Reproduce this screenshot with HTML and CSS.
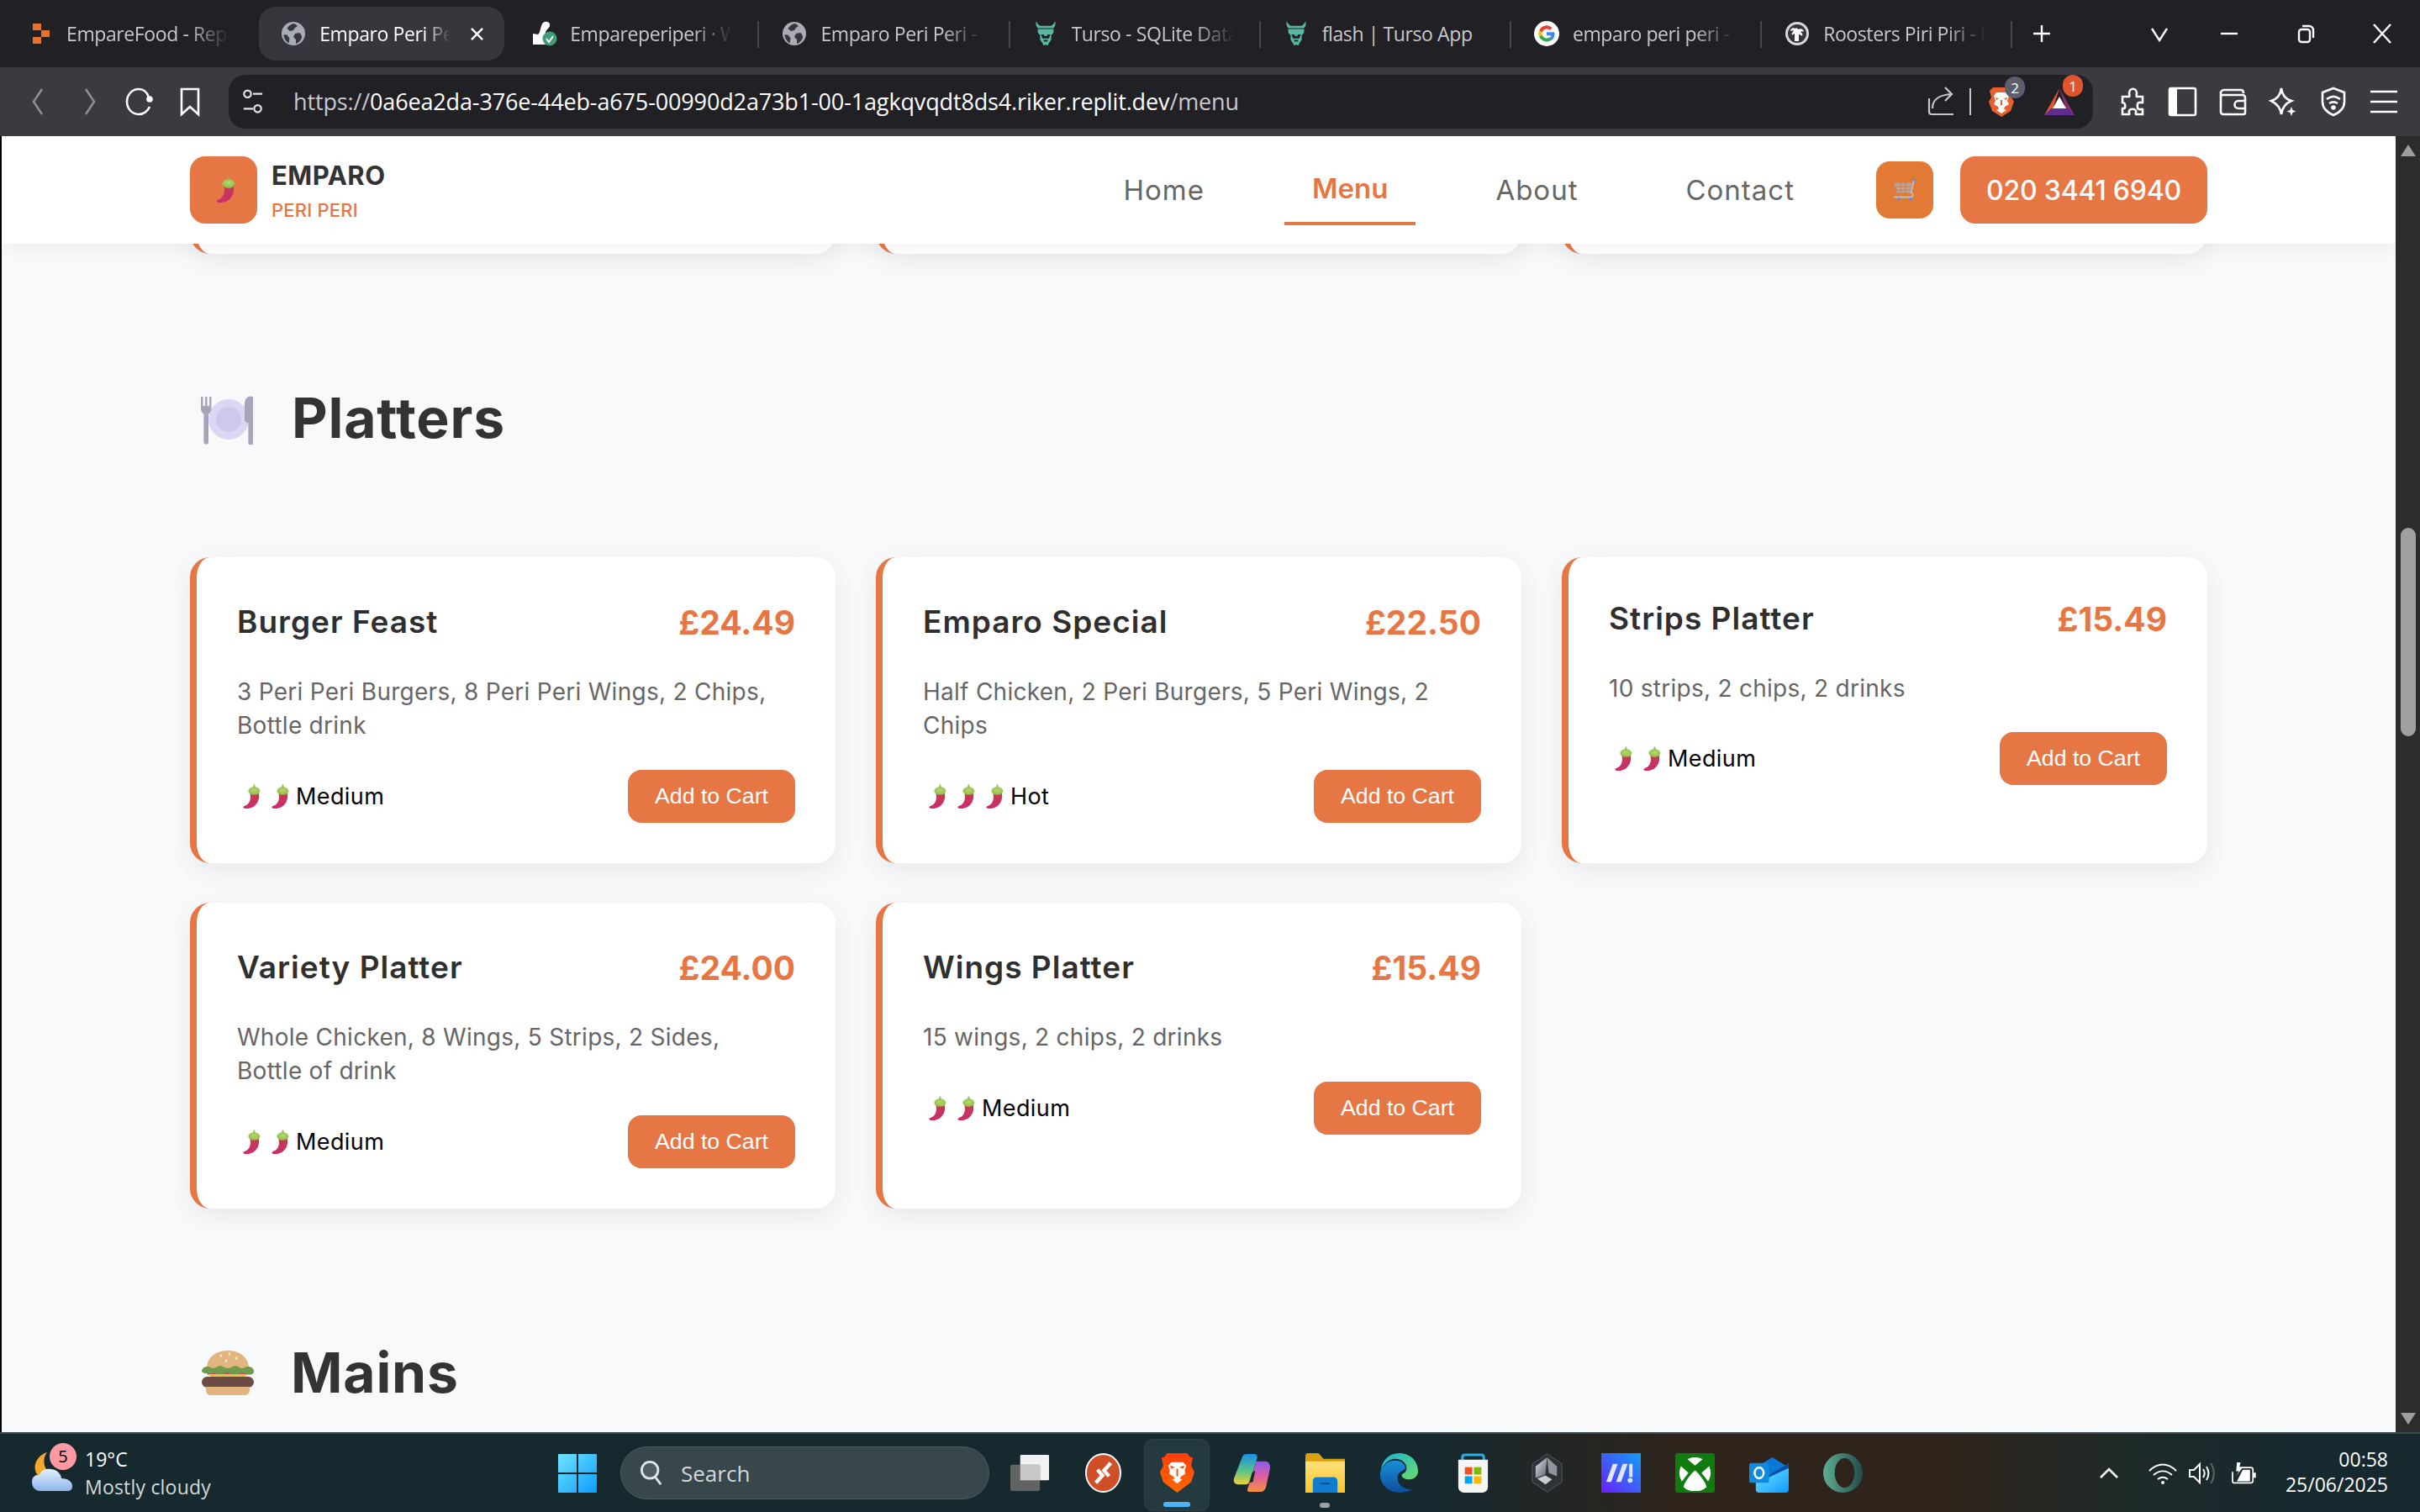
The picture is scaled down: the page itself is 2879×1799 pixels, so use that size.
FILE: index.html
```html
<!DOCTYPE html>
<html lang="en">
<head>
<meta charset="utf-8">
<title>Emparo Peri Peri - Menu</title>
<link rel="stylesheet" href="styles.css">
</head>
<body>
<svg class="defs" aria-hidden="true">
  <defs>
    <linearGradient id="gChili" x1="0" y1="0" x2="0" y2="1"><stop offset="0" stop-color="#c43c50"/><stop offset="1" stop-color="#c92d70"/></linearGradient>
    <radialGradient id="gCap" cx=".5" cy=".4" r=".6"><stop offset="0" stop-color="#b9d96a"/><stop offset="1" stop-color="#8dba4a"/></radialGradient>
    <linearGradient id="gBrave" x1="0" y1="0" x2="0" y2="1"><stop offset="0" stop-color="#ff3d0c"/><stop offset="1" stop-color="#ff6a00"/></linearGradient>
    <linearGradient id="gStart" x1="0" y1="0" x2="1" y2="1"><stop offset="0" stop-color="#6fe5ff"/><stop offset="1" stop-color="#0f9bff"/></linearGradient>
    <linearGradient id="gCloud" x1="0" y1="0" x2="0" y2="1"><stop offset="0" stop-color="#e6f0ff"/><stop offset="1" stop-color="#8db4ec"/></linearGradient>
    <linearGradient id="gCopA" x1="0" y1="0" x2="0" y2="1"><stop offset="0" stop-color="#1a8fe8"/><stop offset=".55" stop-color="#58c48a"/><stop offset="1" stop-color="#f2d02c"/></linearGradient>
    <linearGradient id="gCopB" x1="0" y1="0" x2="0" y2="1"><stop offset="0" stop-color="#8a5cf0"/><stop offset=".5" stop-color="#e05fa0"/><stop offset="1" stop-color="#f5913c"/></linearGradient>
    <linearGradient id="gEdge" x1="0" y1="0" x2="1" y2="1"><stop offset="0" stop-color="#1bb3d6"/><stop offset="1" stop-color="#6bdc6e"/></linearGradient>
    <linearGradient id="gEdgeB" x1="0" y1="0" x2="0" y2="1"><stop offset="0" stop-color="#1a8fd8"/><stop offset="1" stop-color="#0d4e9a"/></linearGradient>
    <linearGradient id="gMail" x1="1" y1="0" x2="0" y2="1"><stop offset="0" stop-color="#0f9ff5"/><stop offset="1" stop-color="#6a1fff"/></linearGradient>
    <linearGradient id="gShield" x1="0" y1="0" x2="1" y2="1"><stop offset="0" stop-color="#dfe4ea"/><stop offset="1" stop-color="#5a6068"/></linearGradient>
    <linearGradient id="gOpera" x1="0" y1="0" x2="1" y2="0"><stop offset="0" stop-color="#5fae92"/><stop offset="1" stop-color="#234a4a"/></linearGradient>
    <linearGradient id="gFolder" x1="0" y1="0" x2="0" y2="1"><stop offset="0" stop-color="#ffe07a"/><stop offset="1" stop-color="#fdc52e"/></linearGradient>

    <symbol id="chili" viewBox="0 0 26 28">
      <path fill="url(#gChili)" d="M13 9h10c1.500 6-.5 12-5 15.500-3 2.300-9 3.500-11.500 2-1.300-1 0-2.300 1.800-2.800C12.500 22.500 15.500 16 13 9z"/>
      <ellipse cx="18" cy="7.500" rx="6.500" ry="4.500" fill="url(#gCap)"/>
      <rect x="17.200" y="0.500" width="1.700" height="4" fill="#8dba4a"/>
    </symbol>
    <symbol id="plate" viewBox="0 0 64 58">
      <circle cx="34" cy="28" r="24" fill="#dcd6f3"/>
      <circle cx="34" cy="28" r="15" fill="#cfc8ec"/>
      <path fill="#a8a4bb" d="M1 1h2.500v11H6V1h2.500v11H11V1h2.500v14c0 4-2.500 6-3.500 6.500V55a2.800 2.800 0 0 1-5.600 0V21.500C3 21 1 19 1 15z"/>
      <path fill="#a8a4bb" d="M55 3c3-3 7.500-3 8-1v54a2.800 2.800 0 0 1-5.600 0V32c-3 0-4.400-2-4.400-4V10c0-3 .8-5.500 2-7z"/>
    </symbol>
    <symbol id="burger" viewBox="0 0 64 54">
      <path fill="#e2b57f" d="M7 22C7 8 19 1 32 1s25 7 25 21z"/>
      <g fill="#f6e7c8"><ellipse cx="24" cy="7" rx="1.300" ry="2"/><ellipse cx="34" cy="5" rx="1.300" ry="2"/><ellipse cx="42" cy="10" rx="1.300" ry="2"/><ellipse cx="30" cy="13" rx="1.300" ry="2"/></g>
      <path fill="#cf4a5a" d="M8 24h48v6H8z"/>
      <path fill="#6f9b4f" d="M1 25c0-4 3-6 7-6 3 0 4 2 7 2s5-3 8-3 5 3 9 3 6-3 9-3 5 3 8 3 3-2 7-2 7 2 7 6-5 4-8 3-5-2-8-1-6 3-9 2-4-3-7-3-5 3-8 3-6-3-9-2-13 1-13-3z" transform="translate(0 1)"/>
      <path fill="#e8c53a" d="M8 29h48l-8 7H16z"/>
      <rect x="1" y="32" width="62" height="13" rx="6.500" fill="#6c4b42"/>
      <path fill="#e2b57f" d="M6 44h52v4c0 4-3 6-6 6H12c-3 0-6-2-6-6z"/>
    </symbol>
    <symbol id="cart" viewBox="0 0 28 28">
      <path fill="#c9a58c" stroke="#9aa3b3" stroke-width="1.300" d="M2 6h20l-1.500 11H5z"/>
      <path fill="none" stroke="#d07a4a" stroke-width="1" d="M2.800 10h19M3.600 14h17.200M9 6l.8 11M15 6l-.3 11"/>
      <path fill="none" stroke="#b8c0cc" stroke-width="1.800" d="M25 2l-3.500 15c3 1 3 5 .2 5.500H1"/>
      <circle cx="25.500" cy="2" r="1.500" fill="#5f86d8"/>
      <circle cx="7" cy="25" r="1.800" fill="#5f86d8"/><circle cx="21" cy="25" r="1.800" fill="#5f86d8"/>
    </symbol>
    <symbol id="globe" viewBox="0 0 30 30">
      <circle cx="15" cy="15" r="14" fill="#a9acb2"/>
      <path fill="#36363c" d="M15 3c-3 1-6 3-7.500 6l3.500 3 4-1 2-3 3-2c-1.500-1.500-3-3-5-3zM22 14l-5 1-2 4 3 3v5c3-1 6-4 7-7 .5-2-1-5-3-6zM3.500 16c0 4 2 8 6 10.500l1-6-3-4z"/>
    </symbol>
    <symbol id="bull" viewBox="3 0 26 32">
      <path fill="#5bb8a0" d="M4 0c-1 4 0 7 2 9h20c2-2 3-5 2-9-1 3-3 5-5 6H9C7 5 5 3 4 0zM6 10h20v5l-3 3v6l-3 4-1 3-3-1-3 1-1-3-3-4v-6l-3-3z"/>
      <path fill="#202025" d="M10 17h4v2h4v-2h4l-2 5h-8zM13 24h6l-1 2h-4z"/>
    </symbol>
    <symbol id="gicon" viewBox="0 0 32 32">
      <circle cx="16" cy="16" r="16" fill="#fff"/>
      <path fill="#4285f4" d="M26 16.300c0-.8-.1-1.500-.2-2.200H16v4.200h5.700c-.3 1.300-1 2.400-2.100 3.100v2.700h3.400c2-1.800 3-4.600 3-7.800z"/>
      <path fill="#34a853" d="M16 26c2.800 0 5.100-.9 6.900-2.500l-3.400-2.600c-.9.600-2.100 1-3.500 1-2.700 0-5-1.800-5.800-4.300H6.700v2.700C8.400 23.700 11.900 26 16 26z"/>
      <path fill="#fbbc05" d="M10.200 17.600c-.4-1.100-.4-2.200 0-3.300v-2.700H6.700a10 10 0 0 0 0 8.700z"/>
      <path fill="#ea4335" d="M16 10c1.500 0 2.900.5 4 1.600l3-3A10 10 0 0 0 6.700 11.600l3.500 2.700C11 11.800 13.300 10 16 10z"/>
    </symbol>
    <symbol id="lion" viewBox="0 0 32 38">
      <path fill="#e8602c" d="M6 2h20l4 4-2 8 3 5-4 11-11 7-11-7L1 19l3-5-2-8z"/>
      <path fill="#fff" d="M10 8h12l3 4-2 6 2 4-5 3-1 3 3 1-6 4-6-4 3-1-1-3-5-3 2-4-2-6z"/>
      <path fill="#e8602c" d="M13 15l-4-1 1 3zM19 15l4-1-1 3zM15 17h2v6h-2z"/>
    </symbol>
    <symbol id="bravebig" viewBox="0 0 42 48">
      <path fill="url(#gBrave)" d="M9 0h24l4 5 3 0-2 10 4 8-4 12-17 13L4 35 0 23l4-8-2-10 3 0z"/>
      <path fill="#fff" d="M14 11h14l4 4-2 6 1 4-5 3-2 3 3 1-6 5-6-5 3-1-2-3-5-3 1-4-2-6z"/>
      <path fill="#ff4d0c" d="M18.500 17l-6-2 1 4zM23.500 17l6-2-1 4zM20 19h2v9h-2z"/>
    </symbol>
    <symbol id="triangle" viewBox="0 0 36 32">
      <path fill="#e0552e" d="M18 0L0 32h8z"/>
      <path fill="#8a2f6a" d="M18 0l18 32h-8z"/>
      <path fill="#fff" d="M18 10l8 14H10z"/>
      <path fill="#5f2d90" d="M8 24h20l8 8H0z"/>
    </symbol>
    <symbol id="winstart" viewBox="0 0 46 46">
      <path fill="url(#gStart)" d="M1 0h21v22H0V1a1 1 0 0 1 1-1zM24 0h21a1 1 0 0 1 1 1v21H24zM0 24h22v22H1a1 1 0 0 1-1-1zM24 24h22v21a1 1 0 0 1-1 1H24z"/>
    </symbol>
  </defs>
</svg>

<div class="screen">
  <div class="tabstrip">
    <div class="tab"><svg class="fav fav-small" viewBox="0 0 20 24"><path fill="#e8702a" d="M0 0h10v8H0zM10 8h10v8H10zM0 16h10v8H0z"/></svg><span class="tab-title">EmpareFood - Replit</span></div>
    <div class="tab tab-active"><svg class="fav"><use href="#globe"/></svg><span class="tab-title">Emparo Peri Peri - Menu</span><svg class="tab-close" viewBox="0 0 16 16"><path d="M1 1l14 14M15 1L1 15"/></svg></div>
    <div class="tab"><svg class="fav" viewBox="0 0 30 30"><path fill="#fff" d="M14 2c5-3 9 0 8 4-1 3-5 5-5 8v14H2V15l6 1c3-2 3-11 6-14z"/><circle cx="22" cy="21" r="8.500" fill="#3f9b78"/><path fill="none" stroke="#fff" stroke-width="2" d="M18 21l3 4 5-7"/></svg><span class="tab-title">Empareperiperi · Wix Studio</span></div>
    <div class="tab tab-sep"><svg class="fav"><use href="#globe"/></svg><span class="tab-title">Emparo Peri Peri - Admin</span></div>
    <div class="tab tab-sep"><svg class="fav"><use href="#bull"/></svg><span class="tab-title">Turso - SQLite Database</span></div>
    <div class="tab tab-sep"><svg class="fav"><use href="#bull"/></svg><span class="tab-title tab-plain">flash | Turso App</span></div>
    <div class="tab tab-sep"><svg class="fav"><use href="#gicon"/></svg><span class="tab-title">emparo peri peri - Google</span></div>
    <div class="tab tab-sep"><svg class="fav" viewBox="0 0 30 30"><circle cx="15" cy="15" r="14" fill="#d8d8dc"/><circle cx="15" cy="15" r="11" fill="#34343c"/><path fill="#fff" d="M13 9c-3-2-6 0-6 3 2-1 3-1 4 0-2 1-3 3-2 5 1-1 2-2 3-2v9h5v-8c2 0 3 1 4 2 1-2 0-4-2-5 1-1 3-1 4 0 0-3-4-5-7-3-1-2-2-2-3-1z"/></svg><span class="tab-title">Roosters Piri Piri - Kingston</span></div>
    <div class="newtab tab-sep"><svg class="glyph" viewBox="0 0 24 24"><path d="M12 2v20M2 12h20"/></svg></div>
    <div class="winctl">
      <div class="win-chev"><svg class="glyph" viewBox="0 0 24 24"><path d="M3 6l9 14 9-14"/></svg></div>
      <div class="win-btn"><svg class="glyph" viewBox="0 0 24 24"><path d="M2 12h20"/></svg></div>
      <div class="win-btn"><svg class="glyph" viewBox="0 0 24 24"><rect x="4" y="7" width="13" height="15" rx="3"/><path d="M8 3h8a5 5 0 0 1 5 5v9"/></svg></div>
      <div class="win-btn"><svg class="glyph" viewBox="0 0 24 24"><path d="M2 1l20 22M22 1L2 23"/></svg></div>
    </div>
  </div>

  <div class="toolbar">
    <div class="tool"><svg class="tool-ic dim" viewBox="0 0 30 36"><path d="M19 3L9 18l10 15"/></svg></div>
    <div class="tool"><svg class="tool-ic dim" viewBox="0 0 30 36"><path d="M11 3l10 15-10 15"/></svg></div>
    <div class="tool"><svg class="tool-ic" viewBox="0 0 36 36"><path d="M29 13C27 6 22 3 17 3 9 3 3 10 3 18s6 15 14 15c6 0 11-4 13-9"/><circle cx="30" cy="15" r="2.500" fill="#fff"/></svg></div>
    <div class="tool"><svg class="tool-ic" viewBox="0 0 36 36"><path d="M8 3h20v30l-10-9-10 9z"/></svg></div>
    <div class="address">
      <svg class="site-ic" viewBox="0 0 28 32"><circle cx="7" cy="6" r="4.500"/><path d="M14 6h12M2 25h12"/><circle cx="20" cy="25" r="4.500"/></svg>
      <div class="url"><span class="url-dim">https://</span>0a6ea2da-376e-44eb-a675-00990d2a73b1-00-1agkqvqdt8ds4.riker.replit.dev<span class="url-dim">/menu</span></div>
      <div class="addr-ic"><svg class="share" viewBox="0 0 34 36"><path d="M2 14v16a3 3 0 0 0 3 3h26M6 26c0-10 6-16 23-17M21 1l8 8-8 8"/></svg></div>
      <div class="addr-sep"></div>
      <div class="addr-ic addr-brave"><svg class="lion"><use href="#lion"/></svg><span class="addr-badge badge-grey">2</span></div>
      <div class="addr-ic addr-tri"><svg class="tri"><use href="#triangle"/></svg><span class="addr-badge badge-red">1</span></div>
    </div>
    <div class="tool"><svg class="tool-ic" viewBox="0 0 36 36"><path d="M14 8c0-7 9-7 9 0 0 2-1 3 0 4h7v7c-1 1-3-1-4 0-3 0-3 8 0 8 1 1 3-1 4 0v6H22c-1-1 1-3 0-4-1-3-7-3-8 0-1 1 1 3 0 4H6v-7c1-1 3 1 3-1 1-4-1-6-3-6V12h8c1-1 0-2 0-4z" transform="translate(1 0)"/></svg></div>
    <div class="tool"><svg class="tool-ic" viewBox="0 0 36 36"><rect x="3" y="2" width="31" height="32" rx="2"/><path class="fillwhite" d="M3 2h9v32H3z"/></svg></div>
    <div class="tool"><svg class="tool-ic" viewBox="0 0 36 36"><path d="M4 9a4 4 0 0 1 4-5h20c2 0 3 1 3 4M4 9v21a3 3 0 0 0 3 3h24a2 2 0 0 0 2-2V13a3 3 0 0 0-3-3H7a3 3 0 0 1-3-1zM34 17H25a4 4 0 0 0 0 9h9"/></svg></div>
    <div class="tool"><svg class="tool-ic" viewBox="0 0 36 36"><path d="M16 2c1 8 5 13 12 15-7 3-11 8-12 16-1-8-6-13-12-16 7-2 11-7 12-15z"/><path class="fillwhite" d="M28 24l1.500 4 4 1.500-4 1.500-1.500 4-1.500-4-4-1.500 4-1.500z"/></svg></div>
    <div class="tool"><svg class="tool-ic" viewBox="0 0 36 36"><path d="M18 2l13 5v11c0 8-6 13-13 16C11 31 5 26 5 18V7z"/><path d="M10 15c5-4 11-4 16 0M13 20c3-2 7-2 10 0"/><circle cx="18" cy="25" r="1.500" fill="#fff"/></svg></div>
    <div class="tool"><svg class="tool-ic" viewBox="0 0 36 36"><path d="M2 6h32M2 18h32M2 30h32"/></svg></div>
  </div>

  <div class="viewport">
    <div class="page">
      <header class="site-header">
        <div class="brand">
          <div class="brand-mark"><svg class="brand-chili"><use href="#chili"/></svg></div>
          <div class="brand-text">
            <div class="brand-name">EMPARO</div>
            <div class="brand-sub">PERI PERI</div>
          </div>
        </div>
        <nav class="nav">
          <a class="nav-link">Home</a>
          <a class="nav-link nav-active">Menu</a>
          <a class="nav-link">About</a>
          <a class="nav-link">Contact</a>
          <a class="cart-btn"><svg class="cart-ic"><use href="#cart"/></svg></a>
          <a class="phone-btn">020 3441 6940</a>
        </nav>
      </header>

      <main class="content">
        <div class="grid stubs">
          <div class="card stub"></div>
          <div class="card stub"></div>
          <div class="card stub"></div>
        </div>

        <section class="section">
          <h2 class="section-title"><svg class="section-ic section-plate"><use href="#plate"/></svg>Platters</h2>
          <div class="grid">
            <article class="card">
              <div class="card-head"><h3 class="card-name">Burger Feast</h3><div class="card-price">£24.49</div></div>
              <p class="card-desc">3 Peri Peri Burgers, 8 Peri Peri Wings, 2 Chips, Bottle drink</p>
              <div class="card-foot">
                <div class="heat"><svg class="chili"><use href="#chili"/></svg><svg class="chili"><use href="#chili"/></svg><span class="heat-label">Medium</span></div>
                <button class="add-btn">Add to Cart</button>
              </div>
            </article>
            <article class="card">
              <div class="card-head"><h3 class="card-name">Emparo Special</h3><div class="card-price">£22.50</div></div>
              <p class="card-desc">Half Chicken, 2 Peri Burgers, 5 Peri Wings, 2 Chips</p>
              <div class="card-foot">
                <div class="heat"><svg class="chili"><use href="#chili"/></svg><svg class="chili"><use href="#chili"/></svg><svg class="chili"><use href="#chili"/></svg><span class="heat-label">Hot</span></div>
                <button class="add-btn">Add to Cart</button>
              </div>
            </article>
            <article class="card card-raised">
              <div class="card-head"><h3 class="card-name">Strips Platter</h3><div class="card-price">£15.49</div></div>
              <p class="card-desc">10 strips, 2 chips, 2 drinks</p>
              <div class="card-foot">
                <div class="heat"><svg class="chili"><use href="#chili"/></svg><svg class="chili"><use href="#chili"/></svg><span class="heat-label">Medium</span></div>
                <button class="add-btn">Add to Cart</button>
              </div>
            </article>
            <article class="card">
              <div class="card-head"><h3 class="card-name">Variety Platter</h3><div class="card-price">£24.00</div></div>
              <p class="card-desc">Whole Chicken, 8 Wings, 5 Strips, 2 Sides, Bottle of drink</p>
              <div class="card-foot">
                <div class="heat"><svg class="chili"><use href="#chili"/></svg><svg class="chili"><use href="#chili"/></svg><span class="heat-label">Medium</span></div>
                <button class="add-btn">Add to Cart</button>
              </div>
            </article>
            <article class="card">
              <div class="card-head"><h3 class="card-name">Wings Platter</h3><div class="card-price">£15.49</div></div>
              <p class="card-desc">15 wings, 2 chips, 2 drinks</p>
              <div class="card-foot">
                <div class="heat"><svg class="chili"><use href="#chili"/></svg><svg class="chili"><use href="#chili"/></svg><span class="heat-label">Medium</span></div>
                <button class="add-btn">Add to Cart</button>
              </div>
            </article>
          </div>
        </section>

        <section class="section section-next">
          <h2 class="section-title"><svg class="section-ic section-burger"><use href="#burger"/></svg>Mains</h2>
        </section>
      </main>
    </div>
    <div class="scrollbar">
      <div class="scroll-arrow scroll-up"></div>
      <div class="scroll-thumb"></div>
      <div class="scroll-arrow scroll-down"></div>
    </div>
  </div>

  <footer class="taskbar">
    <div class="weather">
      <div class="weather-ic">
        <svg class="weather-art" viewBox="0 0 48 48"><path fill="#f4a92e" d="M18 2C6 6 0 18 6 28c3 3 10 2 14-2C14 20 12 10 18 2z"/><path fill="url(#gCloud)" d="M10 47C2 47 0 40 0 36c0-6 5-9 9-8 2-6 8-8 14-7 8 1 12 7 12 11 8 0 13 4 13 9 0 4-2 6-6 6z" transform="translate(0 1)"/></svg>
        <span class="weather-badge">5</span>
      </div>
      <div class="weather-text"><div>19°C</div><div class="weather-desc">Mostly cloudy</div></div>
    </div>
    <svg class="start"><use href="#winstart"/></svg>
    <div class="search"><svg class="search-ic" viewBox="0 0 30 34"><circle cx="13" cy="13" r="10.500"/><path d="M20 22l7 9"/></svg><span>Search</span></div>
    <div class="apps">
      <div class="app"><svg class="app-ic" viewBox="0 0 48 48"><rect x="13" y="2" width="35" height="31" rx="1" fill="#f2f2f2"/><rect x="1" y="14" width="36" height="32" rx="2" fill="#666" fill-opacity=".95"/><path fill="#c8c8c8" d="M13 14h24v19H13z"/></svg></div>
      <div class="app"><svg class="app-ic" viewBox="0 0 48 48"><ellipse cx="24" cy="24" rx="21" ry="23" fill="#d04f26" stroke="#fff" stroke-width="2"/><path fill="none" stroke="#fff" stroke-width="4.500" d="M33 12l-8 9 6 7M15 36l8-9-6-7"/></svg></div>
      <div class="app app-current"><svg class="app-ic"><use href="#bravebig"/></svg><span class="app-running"></span></div>
      <div class="app"><svg class="app-ic" viewBox="0 0 48 48"><path fill="url(#gCopA)" d="M18 1h10c3 0 4 3 3 6l-9 27c-1 3-2 4-5 4H8c-4 0-6-3-5-7L13 5c1-3 3-4 5-4z"/><path fill="url(#gCopB)" d="M30 10h11c4 0 6 3 6 8l-5 23c-1 4-4 6-7 6H22c-3 0-3-3-2-5l9-29c0-2 0-3 1-3z"/><path fill="#16292f" d="M25 24l4-3-3 14-4 1z"/></svg></div>
      <div class="app app-open"><svg class="app-ic" viewBox="0 0 48 48"><path fill="#dba10a" d="M0 3a3 3 0 0 1 3-3h13l6 7h26v6H0z"/><path fill="url(#gFolder)" d="M0 10h48v38H0z"/><path fill="#0f7ed0" d="M9 34c0-3 2-5 5-5h20c3 0 5 2 5 5v14H9z"/><path fill="#0b4f8c" d="M18 36h12v2H18z"/></svg><span class="app-dot"></span></div>
      <div class="app"><svg class="app-ic" viewBox="0 0 48 48"><path fill="url(#gEdge)" d="M24 0c14 0 23 10 23 22 0 5-4 10-11 10-5 0-9-3-9-5 0-3 6-2 6-9 0-6-6-11-14-11C12 7 5 13 2 20 3 9 12 0 24 0z"/><path fill="url(#gEdgeB)" d="M2 20C6 13 12 9 19 9c8 0 14 5 12 11-2 1-9 3-9 10 0 8 7 14 18 14-4 2-9 4-15 4C11 48 0 38 1 24z"/></svg></div>
      <div class="app"><svg class="app-ic" viewBox="0 0 48 48"><path fill="none" stroke="#27b0ea" stroke-width="3" d="M11 14V5c0-2 1-3 3-3h20c2 0 3 1 3 3v9"/><path fill="#f6f6f6" d="M6 8h36v33a7 7 0 0 1-7 7H13a7 7 0 0 1-7-7z"/><path fill="#f25022" d="M14 17h9v9h-9z"/><path fill="#7fba00" d="M25 17h9v9h-9z"/><path fill="#00a4ef" d="M14 28h9v9h-9z"/><path fill="#ffb900" d="M25 28h9v9h-9z"/></svg></div>
      <div class="app"><svg class="app-ic" viewBox="0 0 48 48"><path fill="#2e3136" stroke="#555a60" d="M24 1l18 12v22L24 47 6 35V13z"/><path fill="url(#gShield)" d="M24 5L10 16v14l12-4z"/><path fill="#8f959c" d="M24 5l12 11v12l-10-4z"/><path fill="#c8ccd0" d="M12 31l10-4 8 5-8 6z"/></svg></div>
      <div class="app"><svg class="app-ic" viewBox="0 0 48 48"><rect width="48" height="48" fill="url(#gMail)"/><path fill="#dfe4ff" d="M14 13h6L12 35H6zM26 13h6l-8 22h-6zM34 13h4v16h-4z"/><circle cx="35" cy="33" r="3" fill="#dfe4ff"/></svg></div>
      <div class="app"><svg class="app-ic" viewBox="0 0 48 48"><rect width="48" height="48" rx="3" fill="#107c10"/><circle cx="24" cy="24" r="19" fill="#fff"/><path fill="#107c10" d="M11 4l13 11L37 4l6 10L32 24l13 17-6 6L24 28 9 47l-6-6 13-17L5 14z"/><path fill="#fff" d="M24 21c4 3 13 14 14 20-4 4-9 5-14 5s-10-1-14-5c1-6 10-17 14-20z"/></svg></div>
      <div class="app"><svg class="app-ic" viewBox="0 0 48 48"><path fill="#0b78d6" d="M28 5l18 11c1 1 2 2 2 4v8H10V16z"/><path fill="#0a4ea5" d="M22 28l26-16v10L32 34z"/><path fill="url(#gStart)" d="M8 26l14 4 26-12v26a4 4 0 0 1-4 4H12a4 4 0 0 1-4-4z"/><rect y="12" width="24" height="24" rx="2" fill="#0e8ae0"/><ellipse cx="12" cy="24" rx="5.500" ry="6.500" fill="none" stroke="#fff" stroke-width="2.600"/></svg></div>
      <div class="app"><svg class="app-ic" viewBox="0 0 48 48"><ellipse cx="24" cy="24" rx="24" ry="24" fill="url(#gOpera)"/><ellipse cx="26" cy="24" rx="12" ry="18" fill="#2e241c"/></svg></div>
    </div>
    <div class="tray">
      <div class="tray-chev"><svg class="tray-ic tray-small" viewBox="0 0 24 14"><path d="M2 12L12 2l10 10"/></svg></div>
      <div class="tray-item"><svg class="tray-ic" viewBox="0 0 34 26"><path d="M1 10c10-10 22-10 32 0M6 15c7-6 15-6 22 0M11 20c4-3 8-3 12 0"/><circle cx="17" cy="24" r="2" fill="#fff" stroke="none"/></svg></div>
      <div class="tray-item"><svg class="tray-ic" viewBox="0 0 34 26"><path d="M1 9v8h5l7 7V2L6 9zM17 8c2 3 2 7 0 10M21 5c3 5 3 11 0 16"/><path class="tray-faint" d="M26 1c5 7 5 17 0 24"/></svg></div>
      <div class="tray-item"><svg class="tray-ic" viewBox="0 0 34 30"><path d="M9 7h18a3 3 0 0 1 3 3v15a3 3 0 0 1-3 3H4a2 2 0 0 1-2-2V13"/><path class="fillwhite" d="M30 14h4v7h-4zM8 0l-1 12h4l-4 7 8-11h-4l2-8zM8 26l8-16h10v16z"/></svg></div>
      <div class="clock"><div>00:58</div><div>25/06/2025</div></div>
    </div>
  </footer>
</div>
</body>
</html>
```
FILE: styles.css
```css
* { box-sizing: border-box; }
html, body { margin: 0; padding: 0; }
body { background: #202025; font-family: "Open Sans", "Noto Sans", sans-serif; overflow: hidden; }
.defs { display: block; width: 0; height: 0; }
svg { display: block; overflow: visible; }
.screen { width: 2879px; height: 1799px; display: flex; flex-direction: column; overflow: hidden; }

/* tab strip */
.tabstrip { height: 80px; flex: none; background: #202025; display: flex; align-items: center; padding-left: 7px; }
.tab { position: relative; flex: none; width: 298.2px; height: 64px; display: flex; align-items: center; padding-left: 29px; color: #c8c8cc; font-size: 23px; letter-spacing: -.4px; }
.tab-active { width: 292px; margin: 0 3px; padding-left: 26px; background: #36363c; border-radius: 20px; color: #fff; }
.tab-sep::before { content: ""; position: absolute; left: 0; top: 17px; width: 2px; height: 32px; background: #47474c; }
.fav { width: 30px; height: 30px; flex: none; margin-right: 16px; }
.fav-small { width: 20px; height: 24px; margin-left: 3px; margin-right: 20px; }
.tab-title { width: 202px; flex: none; white-space: nowrap; overflow: hidden; -webkit-mask-image: linear-gradient(to right, #000 72%, transparent 96%); mask-image: linear-gradient(to right, #000 72%, transparent 96%); }
.tab-active .tab-title { width: 156px; -webkit-mask-image: linear-gradient(to right, #000 80%, transparent 100%); mask-image: linear-gradient(to right, #000 80%, transparent 100%); }
.tab-plain { -webkit-mask-image: none; mask-image: none; }
.tab-close { width: 15px; height: 15px; flex: none; margin-left: 24px; fill: none; stroke: #fff; stroke-width: 2.6; }
.glyph { width: 24px; height: 24px; fill: none; stroke: #fff; stroke-width: 2.4; }
.newtab { position: relative; width: 74px; height: 64px; flex: none; display: flex; align-items: center; justify-content: center; }
.winctl { margin-left: auto; display: flex; align-items: center; height: 80px; }
.win-chev { width: 40px; display: flex; justify-content: center; margin-right: 17px; }
.win-btn { width: 91px; display: flex; justify-content: center; }

/* toolbar */
.toolbar { height: 82px; flex: none; background: #3a3a40; display: flex; align-items: center; padding-left: 16px; }
.tool { width: 60px; height: 60px; flex: none; display: flex; align-items: center; justify-content: center; }
.tool-ic { width: 36px; height: 36px; fill: none; stroke: #fff; stroke-width: 2.6; }
.tool-ic.dim { stroke: #8d8d92; }
.fillwhite { fill: #fff; stroke: none; }
.address { width: 2218px; height: 64px; flex: none; margin: 0 16px; background: #202025; border-radius: 20px; display: flex; align-items: center; padding-left: 16px; padding-right: 20px; }
.site-ic { width: 26px; height: 32px; flex: none; fill: none; stroke: #e4e4e6; stroke-width: 2.4; margin-right: 35px; }
.url { flex: 1; margin-top: -2px; color: #fff; font-size: 27px; letter-spacing: -.14px; white-space: nowrap; overflow: hidden; }
.url-dim { color: #c9c9cd; }
.addr-ic { position: relative; width: 40px; height: 40px; flex: none; display: flex; align-items: center; justify-content: center; }
.share { width: 34px; height: 36px; fill: none; stroke: #c8c8cc; stroke-width: 2.2; }
.addr-sep { width: 2px; height: 32px; flex: none; background: #c8c8cc; margin-left: 13px; margin-right: 16px; }
.addr-tri { margin-left: 29px; }
.lion { width: 32px; height: 38px; }
.tri { width: 36px; height: 32px; }
.addr-badge { position: absolute; width: 24px; height: 26px; border-radius: 13px; display: flex; align-items: center; justify-content: center; color: #fff; font-size: 17px; }
.badge-grey { left: 24px; top: -10px; background: #5c5f6b; }
.badge-red { left: 24px; top: -12px; background: #e0552e; }

/* page */
.viewport { flex: 1; min-height: 0; display: flex; background: #f8f9fb; }
.page { flex: 1; min-width: 0; border-left: 2px solid #000; overflow: hidden; font-family: Inter, "Noto Sans", sans-serif; }
.site-header { position: relative; z-index: 2; height: 128px; background: #fff; box-shadow: 0 4px 20px rgba(0, 0, 0, .06); display: flex; align-items: center; justify-content: space-between; padding-left: 224px; padding-right: 224px; }
.brand { display: flex; align-items: center; gap: 17px; }
.brand-mark { width: 80px; height: 80px; border-radius: 18px; background: #e67644; display: flex; align-items: center; justify-content: center; }
.brand-chili { width: 30px; height: 34px; }
.brand-name { font-size: 31px; font-weight: 700; line-height: 40px; color: #333; letter-spacing: .5px; }
.brand-sub { font-size: 22px; font-weight: 500; line-height: 28px; margin-top: 7px; color: #e67644; letter-spacing: .2px; }
.nav { display: flex; align-items: center; gap: 62px; }
.nav-link { height: 84px; padding: 0 33px; display: flex; align-items: center; font-size: 33px; letter-spacing: 1px; color: #666; }
.nav-active { border-bottom: 4px solid #e67644; color: #e67644; font-weight: 600; letter-spacing: 0; }
.cart-btn { width: 68px; height: 68px; margin-left: 2px; margin-right: -30px; border-radius: 16px; background: #e27a36; display: flex; align-items: center; justify-content: center; }
.cart-ic { width: 28px; height: 28px; }
.phone-btn { width: 294px; height: 80px; border-radius: 18px; background: #e67644; display: flex; align-items: center; justify-content: center; color: #fff; font-size: 32px; font-weight: 500; letter-spacing: -.2px; }

.content { width: 2400px; margin-left: 224px; }
.grid { display: grid; grid-template-columns: repeat(3, 768px); column-gap: 48px; row-gap: 47px; }
.stubs { height: 12px; }
.card { background: #fff; border-left: 8px solid #e67644; border-radius: 24px; box-shadow: 0 8px 30px rgba(0, 0, 0, .07); padding: 48px; }
.stub { height: 60px; margin-top: -48px; padding: 0; }
.card-raised { padding-top: 44px; }
.card-raised .card-desc { margin-bottom: 32px; }
.section { margin-top: 147px; }
.section-next { margin-top: 147px; }
.section-title { margin: 0 0 118px; height: 96px; display: flex; align-items: center; font-size: 66px; font-weight: 700; letter-spacing: .8px; color: #333; }
.section-ic { flex: none; width: 64px; margin-right: 45px; }
.section-plate { height: 58px; margin-left: 12px; margin-top: 6px; }
.section-burger { height: 54px; margin-left: 13px; margin-right: 43px; }
.card-head { height: 59px; margin-bottom: 33px; display: flex; align-items: center; justify-content: space-between; }
.card-name { margin: -3px 0 0; font-size: 37px; font-weight: 600; letter-spacing: 1px; color: #2f2f2f; }
.card-price { font-size: 39px; font-weight: 700; color: #e67644; }
.card-desc { margin: 0 0 33px; max-width: 650px; font-size: 28px; line-height: 40px; letter-spacing: .27px; color: #666; }
.card-foot { display: flex; align-items: center; justify-content: space-between; height: 63px; }
.heat { display: flex; align-items: center; }
.chili { width: 28px; height: 30px; margin-left: 1px; margin-right: 5px; }
.heat-label { margin-left: 2px; font-size: 27px; letter-spacing: .4px; color: #000; }
.add-btn { width: 199px; height: 63px; border: 0; border-radius: 16px; background: #e67644; color: #fff; font-family: "Liberation Sans", Arial, sans-serif; font-size: 26.67px; padding: 0; }

/* scrollbar */
.scrollbar { width: 29px; flex: none; background: #2c2c2c; display: flex; flex-direction: column; align-items: center; padding-top: 10px; padding-left: 5px; padding-right: 5px; }
.scroll-arrow { width: 0; height: 0; border-left: 9px solid transparent; border-right: 9px solid transparent; }
.scroll-up { border-bottom: 14px solid #9e9e9e; }
.scroll-down { border-top: 14px solid #9e9e9e; margin-top: 805px; }
.scroll-thumb { width: 18px; height: 248px; border-radius: 9px; background: #a0a0a0; margin-top: 442px; }

/* taskbar */
.taskbar { height: 95px; flex: none; border-top: 2px solid #3c4b50; background: linear-gradient(to right, #16292f 0, #16292f 1700px, #2e241c 1990px, #2e241c 2320px, #1f2a28 2520px, #16292f 2760px, #16292f 100%); display: flex; align-items: center; padding-left: 38px; padding-right: 38px; color: #fff; }
.weather { width: 626px; flex: none; display: flex; align-items: center; font-size: 23px; line-height: 33px; }
.weather-ic { position: relative; width: 63px; height: 48px; flex: none; }
.weather-art { width: 48px; height: 48px; margin-top: -3px; }
.weather-badge { position: absolute; left: 21px; top: -12px; width: 32px; height: 32px; border-radius: 50%; background: #ff9aa2; color: #000; font-size: 20px; display: flex; align-items: center; justify-content: center; }
.weather-desc { color: #d4dadb; letter-spacing: .2px; }
.start { width: 46px; height: 46px; flex: none; margin-right: 28px; }
.search { width: 439px; height: 63px; flex: none; border: 1px solid #4a5a5e; border-radius: 32px; background: #37474c; display: flex; align-items: center; padding-left: 22px; color: #d2d7d8; font-size: 26px; gap: 21px; }
.search-ic { width: 28px; height: 32px; fill: rgba(255, 255, 255, .12); stroke: #e2e6e7; stroke-width: 3; }
.apps { display: flex; margin-left: 3px; }
.app { position: relative; width: 88px; height: 93px; display: flex; align-items: center; justify-content: center; }
.app-ic { width: 47px; height: 47px; }
.app-current::before { content: ""; position: absolute; left: 5px; right: 5px; top: 6px; bottom: 1px; border-radius: 10px; background: #253a40; border: 1px solid #2d4248; }
.app-current .app-ic { position: relative; }
.app-running { position: absolute; left: 28px; bottom: 6px; width: 32px; height: 6px; border-radius: 3px; background: #4db5f5; }
.app-dot { position: absolute; left: 38px; bottom: 5px; width: 12px; height: 6px; border-radius: 3px; background: #9aa2a4; }
.tray { margin-left: auto; display: flex; align-items: center; }
.tray-chev { width: 40px; margin-right: 20px; display: flex; justify-content: center; }
.tray-item { width: 48px; display: flex; justify-content: center; }
.tray-ic { width: 34px; height: 26px; fill: none; stroke: #fff; stroke-width: 2; }
.tray-small { width: 24px; height: 14px; stroke-width: 2.6; }
.tray-faint { stroke: #5c6666; }
.clock { width: 148px; margin-top: -3px; text-align: right; font-size: 23px; line-height: 30px; }
```
